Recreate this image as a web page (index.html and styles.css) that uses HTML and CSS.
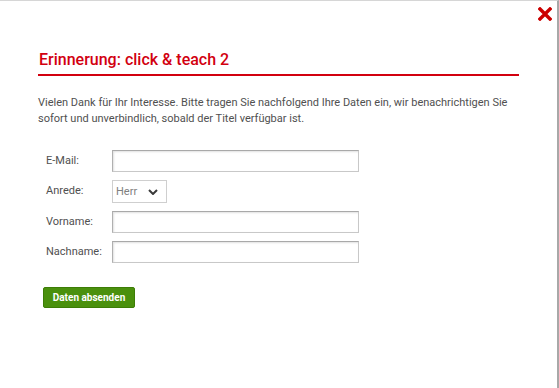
FILE: index.html
```html
<!DOCTYPE html>
<html lang="de">
<head>
<meta charset="utf-8">
<title>Erinnerung</title>
<link rel="stylesheet" href="styles.css">
</head>
<body>
<div class="dialog">
  <button class="close" aria-label="Schließen">
    <svg width="14" height="14" viewBox="0 0 14 14"><path d="M2 2 L12 12 M12 2 L2 12" stroke="#cc0000" stroke-width="3.4" stroke-linecap="square"/></svg>
  </button>
  <div class="content">
    <h2 class="title">Erinnerung: click &amp; teach 2</h2>
    <p class="intro">Vielen Dank für Ihr Interesse. Bitte tragen Sie nachfolgend Ihre Daten ein, wir benachrichtigen Sie sofort und unverbindlich, sobald der Titel verfügbar ist.</p>
    <form class="form">
      <label class="label" for="mail">E-Mail:</label>
      <input class="field" id="mail" type="text">
      <label class="label" for="anrede">Anrede:</label>
      <div class="select">
        <span class="select-value">Herr</span>
        <svg class="chev" width="10" height="6" viewBox="0 0 10 6"><path d="M1 1 L5 5 L9 1" fill="none" stroke="#3a3a3a" stroke-width="2"/></svg>
      </div>
      <label class="label" for="vorname">Vorname:</label>
      <input class="field" id="vorname" type="text">
      <label class="label" for="nachname">Nachname:</label>
      <input class="field" id="nachname" type="text">
    </form>
    <button class="submit" type="button">Daten absenden</button>
  </div>
</div>
</body>
</html>
```
FILE: styles.css
```css
html, body {
  margin: 0;
  padding: 0;
  background: #ffffff;
}
body {
  font-family: Roboto, "Liberation Sans", sans-serif;
}
.dialog {
  position: relative;
  box-sizing: border-box;
  width: 559px;
  height: 388px;
  border-top: 1px solid #d6d6d6;
  border-right: 2px solid #a8a8a8;
  background: #fff;
}
.close {
  position: absolute;
  top: 6px;
  right: 5px;
  width: 14px;
  height: 14px;
  padding: 0;
  border: 0;
  background: none;
  display: flex;
}
.content {
  padding: 49px 38px 0 38px;
}
.title {
  margin: 0;
  font-size: 16px;
  font-weight: 500;
  line-height: 20px;
  color: #d2000f;
  padding-bottom: 4px;
  border-bottom: 2px solid #d2000f;
  padding-left: 1px;
}
.intro {
  margin: 19px 0 0 0;
  font-size: 11px;
  line-height: 16px;
  color: #505050;
}
.form {
  display: grid;
  grid-template-columns: 66px 247px;
  row-gap: 8px;
  align-items: center;
  margin: 23px 0 0 8px;
}
.label {
  font-size: 11px;
  color: #505050;
  margin-top: -2px;
}
.field {
  box-sizing: border-box;
  width: 247px;
  height: 22px;
  margin: 0;
  border: 1px solid #c8c8c8;
  border-top-color: #a9a9a9;
  border-left-color: #b0b0b0;
  box-shadow: inset 1px 1px 2px rgba(0,0,0,0.12);
  background: #fff;
}
.select {
  box-sizing: border-box;
  width: 55px;
  height: 23px;
  border: 1px solid #cfcfcf;
  display: flex;
  align-items: center;
  padding-left: 3px;
  gap: 11px;
}
.select-value {
  font-size: 11px;
  color: #808080;
}
.chev {
  display: block;
}
.submit {
  margin: 24px 0 0 5px;
  box-sizing: border-box;
  width: 92px;
  height: 21px;
  padding: 0;
  border: 1px solid #3d7d06;
  border-radius: 2px;
  background: #4a900d;
  color: #fff;
  font-family: Roboto, "Liberation Sans", sans-serif;
  font-size: 10px;
  font-weight: 700;
}
```
